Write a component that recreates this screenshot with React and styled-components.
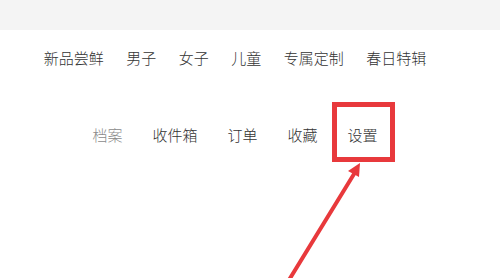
import React from 'react';
import styled, { createGlobalStyle } from 'styled-components';

const GlobalStyle = createGlobalStyle`
  html, body {
    margin: 0;
    padding: 0;
    background: #ffffff;
    font-family: "Noto Sans CJK SC", "Liberation Sans", sans-serif;
  }
`;

const Page = styled.div`
  position: relative;
  width: 500px;
  height: 278px;
  overflow: hidden;
  background: #fff;
`;

const TopBand = styled.div`
  height: 30px;
  background: #f4f4f4;
`;

const Nav = styled.nav`
  display: flex;
  justify-content: center;
  gap: ${props => props.gap}px;
  padding-right: 30px;
  margin-top: ${props => props.top}px;
`;

const NavItem = styled.span`
  position: relative;
  font-size: 15px;
  font-weight: 300;
  line-height: 20px;
  color: ${props => (props.muted ? '#8a8a8a' : '#333333')};
  white-space: nowrap;

  /* red annotation box drawn over the item */
  ${props => props.marked && `
    &::after {
      content: '';
      position: absolute;
      left: -16px;
      right: -17px;
      top: -23px;
      bottom: -17px;
      border: 5px solid #e8393c;
    }
  `}
`;

const Arrow = styled.svg`
  position: absolute;
  left: 0;
  top: 0;
  pointer-events: none;
`;

const mainLinks = ['新品尝鲜', '男子', '女子', '儿童', '专属定制', '春日特辑'];
const accountLinks = ['档案', '收件箱', '订单', '收藏', '设置'];

export default function App() {
  return (
    <Page>
      <GlobalStyle />
      <TopBand />
      <Nav gap={22.5} top={18}>
        {mainLinks.map(l => (
          <NavItem key={l}>{l}</NavItem>
        ))}
      </Nav>
      <Nav gap={30} top={57}>
        {accountLinks.map((l, i) => (
          <NavItem key={l} muted={i === 0} marked={l === '设置'}>{l}</NavItem>
        ))}
      </Nav>
      <Arrow width="500" height="278" viewBox="0 0 500 278">
        <line x1="289" y1="280" x2="354" y2="174" stroke="#e8393c" strokeWidth="4" strokeLinecap="round" />
        <polygon points="360,163 348,171 359,177" fill="#e8393c" />
      </Arrow>
    </Page>
  );
}
